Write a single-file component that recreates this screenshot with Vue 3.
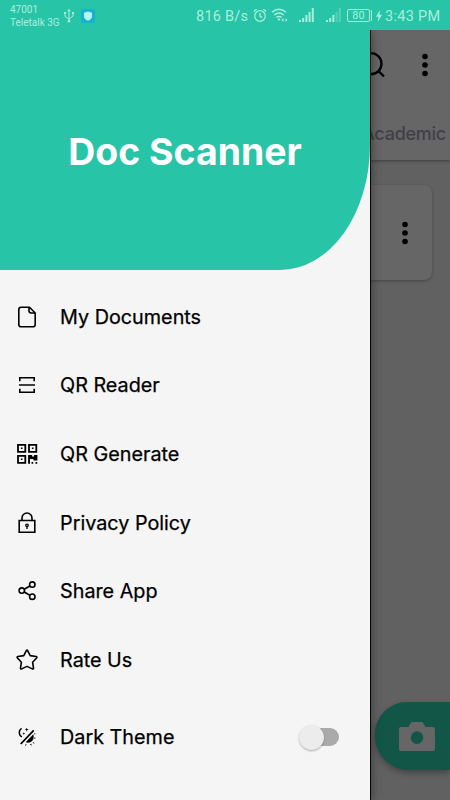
<script setup>
import { ref } from 'vue'

const darkTheme = ref(false)
const items = [
  { id: 'documents', label: 'My Documents' },
  { id: 'reader', label: 'QR Reader' },
  { id: 'generate', label: 'QR Generate' },
  { id: 'privacy', label: 'Privacy Policy' },
  { id: 'share', label: 'Share App' },
  { id: 'rate', label: 'Rate Us' },
]
</script>

<template>
  <div class="screen">
    <header class="status">
      <div class="carrier"><span>47001</span><span>Teletalk 3G</span></div>
      <svg class="usb" width="12" height="16" viewBox="0 0 12 16" fill="none" stroke="currentColor">
        <path d="M6 2v11M2 5.5v3l4 2.5 4-3V5.5" />
        <path d="M6 .8 4.3 3.3h3.4zM1 4h2v2H1zM9 4h2v2H9z" fill="currentColor" stroke="none" />
        <circle cx="6" cy="13.2" r="1.4" fill="currentColor" stroke="none" />
      </svg>
      <svg class="guard" width="14" height="14" viewBox="0 0 14 14">
        <rect width="14" height="14" rx="2.5" fill="#14b3d2" />
        <path d="M7 2.600 11 3.800v3.700c0 2-1.800 3.300-4 4.200-2.200-.9-4-2.200-4-4.200V3.800z" fill="#b5f5ef" />
      </svg>
      <span class="speed">816 B/s</span>
      <svg class="alarm" width="14" height="15" viewBox="0 0 14 15" fill="none" stroke="currentColor" stroke-width="1.300">
        <circle cx="7" cy="8" r="5.300" />
        <path d="M7 5v3.300l2.200 1.300M.8 3.600 3.600 1.200M13.200 3.600l-2.800-2.400" />
      </svg>
      <svg class="wifi" width="17" height="14" viewBox="0 0 17 14" fill="none" stroke="currentColor" stroke-width="1.500">
        <path d="M1 4.300q7-6 14 0M3.200 7q4.800-4 9.600 0M5.300 9.500q2.700-2.200 5.400 0" />
        <path d="m6.500 11.200 1.500-1 1.500 1L8 13zM10.500 12l2-2v4zM16.500 12l-2-2v4z" fill="currentColor" stroke="none" />
      </svg>
      <svg class="signal" width="15" height="14" viewBox="0 0 15 14" fill="currentColor">
        <path d="M0 12h2v2H0zM3.200 10h2v4h-2zM6.400 7h2v7h-2zM9.600 4h2v10h-2zM12.800 0h2v14h-2z" />
      </svg>
      <svg class="signal second" width="15" height="14" viewBox="0 0 15 14" fill="currentColor">
        <path d="M0 12h2v2H0zM3.200 10h2v4h-2zM6.400 7h2v7h-2z" />
        <path d="M9.600 4h2v10h-2zM12.800 0h2v14h-2z" opacity=".35" />
      </svg>
      <span class="battery">80</span>
      <svg class="bolt" width="6" height="12" viewBox="0 0 6 12"><path d="M4 0 0 6.800h2.500L1.800 12 6 4.800H3.400z" fill="currentColor" /></svg>
      <span class="clock">3:43 PM</span>
    </header>

    <main class="body">
      <aside class="drawer">
        <div class="hero"><h1>Doc Scanner</h1></div>
        <nav>
          <a v-for="item in items" :key="item.id" class="row">
            <svg class="icon" width="24" height="24" viewBox="0 0 24 24" fill="none" stroke="#000" stroke-width="1.600">
              <template v-if="item.id === 'documents'">
                <path d="M6 2.200h8.500L20.200 8v11.500a2.300 2.300 0 0 1-2.300 2.300H6.100a2.300 2.300 0 0 1-2.300-2.300v-15A2.300 2.300 0 0 1 6 2.200z" />
                <path d="M14 2.500v3.300a2.200 2.200 0 0 0 2.200 2.200h3.600" />
              </template>
              <template v-else-if="item.id === 'reader'">
                <path d="M4.800 8.300V4.800h14.400v3.500M4.800 15.700v3.500h14.400v-3.500M4 12h16" />
              </template>
              <template v-else-if="item.id === 'generate'">
                <path d="M3 2.800h7.300v7H3zM14 2.800h7.300v7H14zM3 13.800h7.300v7H3z" stroke-width="1.800" />
                <path d="M5.900 5.500h1.600v1.600H5.900zM16.900 5.500h1.600v1.600h-1.600zM5.900 16.500h1.600v1.600H5.900zM13.100 12.900h4v1.500h2v-1.500h3.300v5.600h-4v-1.400H15v4.600h-1.900zM16.500 20.100h1.700v1.700h-1.700zM20.500 20.100h1.700v1.700h-1.700z" fill="#000" stroke="none" />
              </template>
              <template v-else-if="item.id === 'privacy'">
                <path d="M4.200 9.500h15.600v11.800H4.200zM7 9.500V7a5 5 0 0 1 10 0v2.500" />
                <circle cx="12" cy="14.300" r="1.250" stroke-width="1.300" />
                <path d="M12 15.600v2.400" stroke-width="1.300" />
              </template>
              <template v-else-if="item.id === 'share'">
                <circle cx="6.800" cy="11.600" r="2.700" /><circle cx="17.300" cy="5.600" r="2.700" /><circle cx="17.300" cy="17.700" r="2.700" />
                <path d="m9.200 10.200 5.700-3.200M9.200 13l5.700 3.300" />
              </template>
              <path v-else stroke-linejoin="round" d="M11.200 2.800q.8-1.300 1.600 0l2.400 4.800 5.900.9q1.300.4.500 1.500l-4 4.200.9 5.900q0 1.300-1.200.8L12 18.400l-5.300 2.500q-1.200.5-1.200-.8l.9-5.900-4-4.200q-.8-1.100.5-1.500l5.900-.9z" />
            </svg>
            <span>{{ item.label }}</span>
          </a>
        </nav>
        <label class="row theme">
          <svg class="icon" width="24" height="24" viewBox="0 0 24 24">
            <path d="M6.600 3.400a4.800 4.800 0 0 0 .3 8.400" fill="none" stroke="#000" stroke-width="1.500" />
            <path d="M5.700 19 18.700 5.300" stroke="#000" stroke-width="1.800" />
            <path d="M10.700 17.200 18.300 9.300q1.200 4.200-1.200 6.600-2.600 2.600-6.400 1.300z" />
            <path d="m11.700 2.800.6 1.300 1.400.4-1.400.6-.6 1.400-.6-1.400-1.400-.6 1.400-.4zM8.800 7.300l.5 1 .9.300-.9.400-.5 1-.4-1-1-.4 1-.3zM19 8.700l1.500-.6-.5 1.700zM19.400 12.300l1.500.8-1.500.8zM18.200 17l1.600 1.700-2.100-.6zM14.800 19.300l1.500-.6.400 2zM10 19.600h1.700l-1 1.400z" />
          </svg>
          <span>Dark Theme</span>
          <input v-model="darkTheme" type="checkbox" />
          <i class="switch" />
        </label>
      </aside>

      <section class="page">
        <div class="toolbar">
          <div class="actions">
            <svg class="search" width="24" height="30" viewBox="0 0 24 30" fill="none" stroke="#000" stroke-width="2.300"><circle cx="1" cy="13.700" r="10.500" /><path d="m8.500 21.200 5.500 5.300" /></svg>
            <svg class="dots" width="6" height="24" viewBox="0 0 6 24"><circle cx="3" cy="3.500" r="2.800" /><circle cx="3" cy="12" r="2.800" /><circle cx="3" cy="20.500" r="2.800" /></svg>
          </div>
          <div class="tab">Academic</div>
        </div>
        <div class="card">
          <svg class="dots" width="6" height="24" viewBox="0 0 6 24"><circle cx="3" cy="3.500" r="2.800" /><circle cx="3" cy="12" r="2.800" /><circle cx="3" cy="20.500" r="2.800" /></svg>
        </div>
        <button class="camera">
          <svg width="36" height="30" viewBox="0 0 36 30"><path fill-rule="evenodd" d="M2 5h7.500l2.300-4q.5-1 1.500-1h9.400q1 0 1.500 1l2.300 4H34q2 0 2 2v20q0 2-2 2H2q-2 0-2-2V7q0-2 2-2zM18 9.300a6.300 6.300 0 1 0 0 12.600 6.300 6.300 0 0 0 0-12.600z" fill="#666" /></svg>
        </button>
      </section>
    </main>
  </div>
</template>

<style>
body { margin: 0; overflow: hidden; }
</style>

<style scoped>
* { box-sizing: border-box; }
svg { display: block; flex: none; }
.screen { width: 450px; height: 800px; display: flex; flex-direction: column; overflow: hidden; font-family: Inter, sans-serif; background: #27c4a7; }
.status { height: 30px; flex: none; display: flex; align-items: center; padding: 2px 0 0 10px; color: #a9efdd; font-family: Roboto, sans-serif; white-space: nowrap; }
.carrier { width: 52px; margin-top: -1px; display: flex; flex-direction: column; font-size: 10px; line-height: 13px; }
.usb { margin-left: 1px; margin-top: -1px; }
.guard { margin-left: 6px; margin-top: -1px; }
.speed { width: 52px; margin-left: 101px; font-size: 14.500px; letter-spacing: .25px; }
.alarm { margin-left: 5px; margin-top: -2px; }
.wifi { margin-left: 4px; margin-top: -2px; }
.signal { margin-left: 11px; margin-top: -2px; }
.signal.second { margin-left: 12px; }
.battery { width: 23px; height: 13px; margin-left: 6px; margin-top: -1px; border: 1px solid currentColor; border-radius: 2px; font-size: 11px; line-height: 11px; text-align: center; box-shadow: 2px 0 0 -1px #27c4a7, 3px 0 0 -1px currentColor; }
.bolt { margin-left: 6px; margin-top: -1px; }
.clock { margin-left: 3px; font-size: 14.500px; letter-spacing: .3px; }
.body { flex: 1; min-height: 0; display: flex; overflow: hidden; }
.drawer { width: 370px; flex: none; background: #f5f5f5; position: relative; z-index: 1; box-shadow: 1px 0 0 #050505, 2px 0 9px rgba(0, 0, 0, .35); }
.hero { height: 240px; display: flex; align-items: center; justify-content: center; background: #27c4a7; border-bottom-right-radius: 90px 125px; }
h1 { margin: 4px 0 0; color: #fff; font-size: 37.400px; line-height: 46px; font-weight: 700; white-space: nowrap; }
nav { padding-top: 12.300px; }
.row { height: 68.700px; display: flex; align-items: center; padding-left: 15px; font-size: 19.800px; font-weight: 400; color: #000; }
.row span { margin-left: 21px; white-space: nowrap; -webkit-text-stroke: .25px #000; }
.theme { margin-top: 8.500px; padding-right: 31px; }
.theme input { display: none; }
.switch { width: 36px; height: 18px; margin-left: auto; border-radius: 9px; background: #aaa; display: flex; align-items: center; }
.switch::before { content: ''; width: 25px; height: 25px; flex: none; margin-left: -4px; border-radius: 50%; background: #ececec; box-shadow: 0 1px 2px rgba(0, 0, 0, .3); }
.page { width: 80px; flex: none; background: #616161; display: flex; flex-direction: column; }
.toolbar { height: 130px; background: #666; box-shadow: 0 1px 3px rgba(0, 0, 0, .4); }
.actions { height: 70px; display: flex; align-items: center; }
.dots { margin-left: 28px; }
.tab { display: flex; justify-content: flex-end; padding: 22px 4px 0 0; color: #404046; font-size: 18px; font-weight: 500; letter-spacing: -.25px; line-height: 24px; white-space: nowrap; }
.card { width: 62px; height: 95px; margin-top: 25px; border-radius: 0 8px 8px 0; background: #666; box-shadow: 0 1px 3px rgba(0, 0, 0, .3); display: flex; align-items: center; padding-left: 4px; }
.camera { width: 75px; height: 68px; margin: auto 0 30px 5px; padding: 2px 0 0 24px; border: 0; border-radius: 32px 0 0 34px; background: #115646; display: flex; align-items: center; box-shadow: 0 3px 6px rgba(0, 0, 0, .3); }
</style>
